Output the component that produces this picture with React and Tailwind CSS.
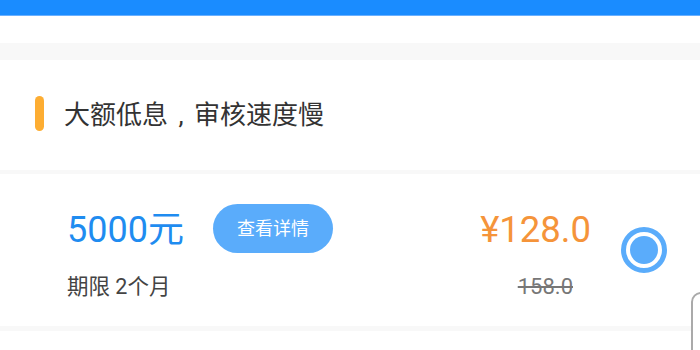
import React from "react";

function LoanCard() {
  return (
    <div className="flex h-[152px] items-center bg-white">
      <div className="flex flex-col pl-[67px] pt-[5px]">
        <div className="flex h-[49px] items-center">
          <span className="w-[116px] shrink-0 whitespace-nowrap pt-[4px] text-[36px] leading-none text-[#1f8cf0]">5000元</span>
          <button className="ml-[30px] h-[49px] w-[120px] shrink-0 rounded-full bg-[#5aacfb] text-[18px] text-white">
            查看详情
          </button>
        </div>
        <div className="mt-[19px] whitespace-nowrap text-[21.5px] leading-[30px] text-[#444]">期限 2个月</div>
      </div>
      <div className="ml-auto flex flex-col items-end pt-[5px]">
        <div className="flex h-[49px] items-center whitespace-nowrap pt-[4px] text-[36.5px] leading-none text-[#f5943a]">¥128.0</div>
        <div className="mr-[18px] mt-[19px] text-[22px] leading-[30px] text-[#777] line-through">158.0</div>
      </div>
      <div className="ml-[30px] mr-[33px] flex h-[46px] w-[46px] shrink-0 items-center justify-center rounded-full border-[5px] border-[#5aacfb] bg-white">
        <div className="h-[28px] w-[28px] rounded-full bg-[#5aacfb]"></div>
      </div>
    </div>
  );
}

export default function App() {
  return (
    <div
      className="relative h-[350px] w-[700px] overflow-hidden bg-white"
      style={{ fontFamily: 'Roboto, "Noto Sans CJK SC", sans-serif' }}
    >
      <div className="h-[16px] border-b border-[#6ab0ff] bg-[#1a8cff]"></div>
      <div className="h-[27px] bg-white"></div>
      <div className="h-[17px] bg-[#f8f8f8]"></div>
      <div className="flex h-[110px] items-center bg-white pb-[4px]">
        <div className="ml-[35px] h-[35px] w-[9px] rounded-full bg-[#fdad32]"></div>
        <h1 className="ml-[20px] whitespace-nowrap pt-[5px] text-[26px] text-[#333]">
          大额低息<span className="inline-block w-[26px] text-center">,</span>审核速度慢
        </h1>
      </div>
      <div className="h-[4px] bg-[#f8f8f8]"></div>
      <LoanCard />
      <div className="h-[5px] bg-[#f8f8f8]"></div>
      <div className="h-[20px] bg-white"></div>
      <div className="absolute left-[691px] top-[292px] h-[70px] w-[20px] rounded-tl-[10px] border-2 border-[#aaa] bg-white"></div>
    </div>
  );
}
